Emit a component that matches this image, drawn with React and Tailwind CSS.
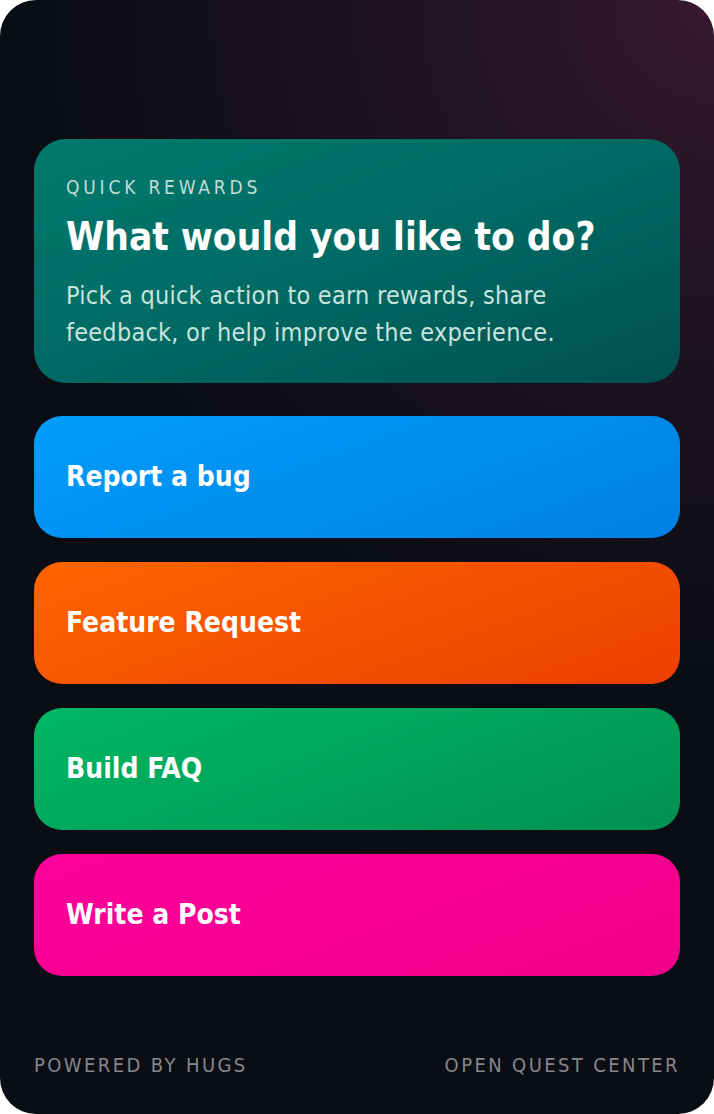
import React from 'react';

const actions = [
  { label: 'Report a bug', className: 'bg-[linear-gradient(160deg,#009dfb_0%,#0080e2_100%)]' },
  { label: 'Feature Request', className: 'bg-[linear-gradient(160deg,#ff6500_0%,#ec3f00_100%)]' },
  { label: 'Build FAQ', className: 'bg-[linear-gradient(160deg,#00b764_0%,#009150_100%)]' },
  { label: 'Write a Post', className: 'bg-[linear-gradient(160deg,#ff009c_0%,#f0008a_100%)]' },
];

function App() {
  return (
    <div className="w-[714px] h-[1114px] bg-white font-['DejaVu_Sans_Condensed','DejaVu_Sans',sans-serif]">
      <div className="w-full h-full rounded-[36px] overflow-hidden bg-[#0b0d14] bg-[radial-gradient(circle_at_100%_0%,#37182f_0%,#1e1322_24%,#0b0d14_50%)] flex flex-col px-[34px] pt-[139px]">
        <div className="h-[244px] rounded-[32px] bg-[linear-gradient(160deg,#007a6d_0%,#006c65_45%,#004f50_100%)] px-8 pt-[36px]">
          <div className="text-[19px] leading-6 tracking-[0.2em] text-[#c2dcd6]">QUICK REWARDS</div>
          <h1 className="mt-[14px] text-[38.5px] leading-[48px] font-bold text-white">What would you like to do?</h1>
          <p className="mt-[16px] text-[25px] leading-[37px] tracking-[0.01em] text-[#c7e3dd]">
            Pick a quick action to earn rewards, share feedback, or help improve the experience.
          </p>
        </div>

        <div className="mt-[33px] flex flex-col gap-[24px]">
          {actions.map((a) => (
            <button
              key={a.label}
              className={`h-[122px] rounded-[28px] flex items-center pl-8 text-left text-[28px] font-bold text-white ${a.className}`}
            >
              {a.label}
            </button>
          ))}
        </div>

        <div className="mt-auto mb-[34px] flex items-center justify-between text-[20px] tracking-[0.12em] text-[#85878d]">
          <span>POWERED BY HUGS</span>
          <span>OPEN QUEST CENTER</span>
        </div>
      </div>
    </div>
  );
}

export default App;
